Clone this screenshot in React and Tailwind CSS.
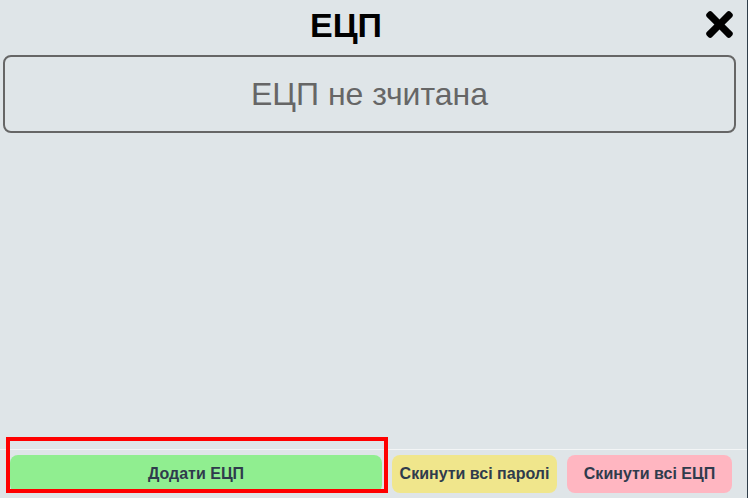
import { FaTimes } from 'react-icons/fa';

function App() {
  return (
    <div
      className="h-[498px] w-[748px] flex flex-col bg-[#dfe5e8] border-r border-[#2f3e4a] overflow-hidden"
      style={{ fontFamily: '"Liberation Sans", Arial, sans-serif' }}
    >
      <header className="h-[49px] flex items-center">
        <h1 className="flex-1 text-center text-[34px] font-bold text-black leading-none">ЕЦП</h1>
        <button className="w-[55px] flex items-center justify-center text-black">
          <FaTimes size={39} />
        </button>
      </header>

      <main className="flex-1">
        <div className="ml-[3px] mt-[6px] w-[733px] h-[78px] border-2 border-[#666] rounded-lg flex items-center justify-center">
          <span className="text-[32px] text-[#666]">ЕЦП не зчитана</span>
        </div>
      </main>

      <footer className="border-t border-[#f3f5f6] pt-[5px] pb-[5px] pl-[10px] pr-[15px] flex gap-[10px]">
        <div className="relative flex-1">
          <button className="w-full h-[38px] rounded-lg bg-[#90ee90] text-[16px] font-bold text-[#2f3b4c]">
            Додати ЕЦП
          </button>
          <div className="absolute left-[-4px] top-[-18px] w-[382px] h-[56px] border-4 border-[#ff0000]"></div>
        </div>
        <button className="w-[165px] h-[38px] rounded-lg bg-[#f0e68c] text-[16px] font-bold text-[#2f3b4c]">
          Скинути всі паролі
        </button>
        <button className="w-[165px] h-[38px] rounded-lg bg-[#ffb6c1] text-[16px] font-bold text-[#2f3b4c]">
          Скинути всі ЕЦП
        </button>
      </footer>
    </div>
  );
}

export default App;
